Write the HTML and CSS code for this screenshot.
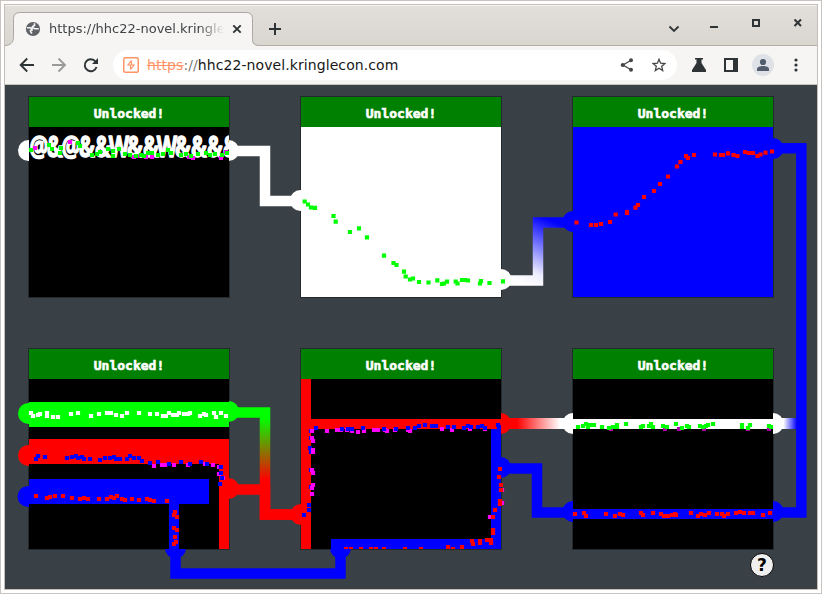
FILE: index.html
```
<!DOCTYPE html>
<html lang="en">
<head>
<meta charset="utf-8">
<title>https://hhc22-novel.kringlecon.com</title>
<link rel="stylesheet" href="styles.css">
</head>
<body>
<div class="window">
  <header class="tabstrip">
    <svg class="tab-shape" width="262" height="34" viewBox="0 0 262 34"><path d="M0 33.500C5 33.500 8.500 30.500 8.500 25.500V6.500Q8.500 .5 15 .5H241Q247.500 .5 247.500 6.500V27.500Q247.500 33.500 254 33.500V35H0Z"/></svg>
    <div class="tab">
      <svg class="globe" width="16" height="16" viewBox="0 0 16 16"><circle cx="8" cy="8" r="7.100" fill="#5f6368"/><path d="M2 6.800H5Q7.200 7 7 9.200H5.500V10.500L7 12.500M9.500 2.200V4.500L7.500 5.500V6.800L10 7.800H13.800" fill="none" stroke="#f5f4f2" stroke-width="1.600"/></svg>
      <span class="tab-title">https://hhc22-novel.kringle</span>
      <svg width="10" height="10" viewBox="0 0 10 10"><path d="M1.300 1.300 8.700 8.700M8.700 1.300 1.300 8.700" fill="none" stroke="#2e3436" stroke-width="1.900"/></svg>
    </div>
    <svg class="plus" width="12" height="12" viewBox="0 0 12 12"><path d="M6 0V12M0 6H12" stroke="#2e3436" stroke-width="2"/></svg>
    <svg class="controls" width="134" height="20" viewBox="0 0 134 20"><g fill="none" stroke="#2e3436"><path d="M1.500 11.500 6 16 10.500 11.500" stroke-width="1.800"/><path d="M42 12H50" stroke-width="2"/><path d="M85 5H91V11H85Z" stroke-width="2"/><path d="M126.500 4.500 133 11M133 4.500 126.500 11" stroke-width="2"/></g></svg>
  </header>
  <nav class="toolbar">
    <svg class="nav-icons" width="80" height="16" viewBox="0 0 80 16"><g fill="none" stroke-width="1.900"><path d="M15 8H2M8.200 1.500 1.700 8 8.200 14.500" stroke="#2e3436"/><path d="M33 8H46M39.500 1.500 46 8 39.500 14.500" stroke="#999b9b"/><path d="M76.500 4.500A6 6 0 1 0 77.500 10" stroke="#2e3436"/></g><path d="M79 1V7H73Z" fill="#2e3436"/></svg>
    <div class="address">
      <svg width="16" height="16" viewBox="0 0 16 16"><rect x=".75" y=".75" width="14.500" height="14.500" rx="1.500" fill="none" stroke="#ff9567" stroke-width="1.500"/><path d="M8.500 3.500 5 8H11L7.500 12.500M8.500 3.500V8M7.500 8V12.500" fill="none" stroke="#ff9567" stroke-width="1.200"/></svg>
      <span class="url"><s>https</s><i>://</i>hhc22-novel.kringlecon.com</span>
      <svg class="share" width="14" height="14" viewBox="0 0 14 14"><path d="M11 2.300 3 7 11 11.700" fill="none" stroke="#454545" stroke-width="1.300"/><circle cx="11" cy="2.300" r="2" fill="#454545"/><circle cx="2.800" cy="7" r="2.100" fill="#454545"/><circle cx="11" cy="11.700" r="2" fill="#454545"/></svg>
      <svg class="star" width="14" height="14" viewBox="0 0 14 14"><path d="M7 1.300 8.600 5.200 13 5.500 9.700 8.300 10.700 12.600 7 10.300 3.300 12.600 4.300 8.300 1 5.500 5.400 5.200Z" fill="none" stroke="#454545" stroke-width="1.300"/></svg>
    </div>
    <svg class="flask" width="14" height="14" viewBox="0 0 14 14"><path d="M3 0H11V1.500H9.500V5L14 12V14H0V12L4.500 5V1.500H3Z" fill="#2e3436"/></svg>
    <svg class="side" width="14" height="14" viewBox="0 0 14 14"><path fill-rule="evenodd" d="M0 0H14V14H0ZM2 2V12H9V2Z" fill="#2e3436"/></svg>
    <svg class="avatar" width="22" height="22" viewBox="0 0 22 22"><circle cx="11" cy="11" r="11" fill="#dee1e6"/><circle cx="11" cy="8" r="3.100" fill="#515c6d"/><path d="M5 17V15C5 13 8 12 11 12S17 13 17 15V17Z" fill="#515c6d"/></svg>
    <svg class="more" width="4" height="14" viewBox="0 0 4 14"><g fill="#2e3436"><circle cx="2" cy="2" r="1.600"/><circle cx="2" cy="7" r="1.600"/><circle cx="2" cy="12" r="1.600"/></g></svg>
  </nav>
  <main class="stage">
    <div class="boards">
      <section class="board"><h2>Unlocked!</h2></section>
      <section class="board white"><h2>Unlocked!</h2></section>
      <section class="board blue"><h2>Unlocked!</h2></section>
      <section class="board"><h2>Unlocked!</h2></section>
      <section class="board"><h2>Unlocked!</h2></section>
      <section class="board"><h2>Unlocked!</h2></section>
    </div>
    <!-- Flow canvas: connectors, painted strokes and particles, in window coordinates. -->
    <svg class="flow" viewBox="5 85 812 503" width="812" height="503">
      <defs>
        <linearGradient id="wb" gradientUnits="userSpaceOnUse" x1="518" y1="281" x2="545" y2="218"><stop offset="0" stop-color="#fff"/><stop offset=".2" stop-color="#eeeeff"/><stop offset="1" stop-color="#00f"/></linearGradient>
        <linearGradient id="gr" gradientUnits="userSpaceOnUse" x1="0" y1="418" x2="0" y2="480"><stop offset="0" stop-color="#0f0"/><stop offset="1" stop-color="#f00"/></linearGradient>
        <linearGradient id="rw"><stop offset=".22" stop-color="#f00"/><stop offset=".82" stop-color="#fff"/></linearGradient>
        <linearGradient id="wbl"><stop offset=".2" stop-color="#fff"/><stop offset="1" stop-color="#00f"/></linearGradient>
        <clipPath id="out"><path d="M5 85H817V588H5ZM29 97V297H229V97ZM301 97V297H501V97ZM573 97V297H773V97ZM29 349V549H229V349ZM301 349V549H501V349ZM573 349V549H773V349Z" clip-rule="evenodd"/></clipPath>
        <clipPath id="b1"><path d="M29 127H229V297H29Z"/></clipPath>
      </defs>
      <g class="pipes">
        <path class="w" d="M229 151H265V201H301"/>
        <path class="b" d="M773 148.300H801.300V512.500H773"/>
        <path d="M501 280.500H538V222.500H573" stroke="url(#wb)"/>
        <path d="M229 412.500H265V514.500H301" stroke="url(#gr)"/>
        <path class="r" d="M229 489.500H265V514.500H301"/>
        <path class="b" d="M175.500 549V573.500H340.500V549M501 468.500H537V512.500H573"/>
      </g>
      <path fill="url(#rw)" d="M501 418H573V429H501Z"/>
      <path fill="url(#wbl)" d="M780 418H797V429H780Z"/>
      <g clip-path="url(#out)">
        <g fill="#fff"><circle cx="28.500" cy="150.500" r="10.500"/><circle cx="228.500" cy="150.500" r="10.500"/><circle cx="300.500" cy="200.500" r="10.500"/><circle cx="501" cy="279.500" r="10.500"/><circle cx="573" cy="423.500" r="10.500"/><circle cx="773" cy="423.500" r="10.500"/></g>
        <g fill="#00f"><circle cx="573" cy="221.500" r="10.500"/><circle cx="773" cy="148.500" r="10.500"/><circle cx="28" cy="496.500" r="10.500"/><circle cx="175.500" cy="548" r="10.500"/><circle cx="340.500" cy="548" r="10.500"/><circle cx="500.500" cy="467.500" r="10.500"/><circle cx="573" cy="511.500" r="10.500"/><circle cx="773" cy="511.500" r="10.500"/></g>
        <g fill="#f00"><circle cx="28.500" cy="455.500" r="10.500"/><circle cx="228.500" cy="488.500" r="10.500"/><circle cx="301" cy="514.500" r="10.500"/><circle cx="500.500" cy="423.500" r="10.500"/></g>
        <g fill="#0f0"><circle cx="28.500" cy="413.500" r="10.500"/><circle cx="228.500" cy="411.500" r="10.500"/></g>
      </g>
      <path fill="#0f0" d="M29 402H229V427H29Z"/>
      <path fill="#f00" d="M29 439H229V549H219V464H29ZM301 379H311V419H501V429H311V549H301Z"/>
      <path fill="#00f" d="M29 479H209V504H179V549H169V504H29ZM491 429H501V549H331V539H491ZM573 509H773V519H573Z"/>
      <path fill="#fff" d="M573 419H773V429H573Z"/>
      <g clip-path="url(#b1)"><text class="glyphs" transform="translate(39 157) scale(.75 1)" x="0 21.300 42.600 64 85.300 106.600 128 149.300 170.600 192 213.300 234.600 256" y="0">@&amp;@&amp;&amp;W&amp;&amp;W&amp;&amp;&amp;&amp;</text></g>
      <g class="dots" id="dots"></g>
    </svg>
    <button class="help">?</button>
  </main>
</div>
<script src="dots.js"></script>
</body>
</html>
```
FILE: styles.css
```
* { box-sizing: border-box; }
body { margin: 0; width: 822px; height: 594px; overflow: hidden; background: #fff; border: 1px solid #c8c3bf; padding: 3px; font-family: "DejaVu Sans", sans-serif; }
svg { display: block; flex: none; }
.window { width: 814px; height: 586px; border: 1px solid #c5beb8; display: flex; flex-direction: column; background: #3a4146; }
.tabstrip { position: relative; height: 41px; flex: none; display: flex; background: linear-gradient(#e2deda, #d9d6d0); border-top: 1px solid #f6f4f2; border-bottom: 1px solid #b0aca6; }
.tab-shape { position: absolute; left: 0; top: 6px; fill: #f6f5f3; stroke: #aaa8a4; }
.tab { position: relative; width: 248px; height: 38px; padding: 7px 11px 0 20px; display: flex; align-items: center; }
.tab-title { width: 177px; margin: 0 6px 0 8px; overflow: hidden; white-space: nowrap; font-size: 13px; line-height: 20px; color: #404446; -webkit-mask-image: linear-gradient(90deg, #000 150px, transparent 175px); mask-image: linear-gradient(90deg, #000 150px, transparent 175px); }
.plus { margin: 17px 0 0 16px; }
.controls { margin: 9px 15px 0 auto; }
.toolbar { height: 39px; flex: none; display: flex; align-items: center; background: #f6f5f3; border-bottom: 1px solid #c9c6bc; padding: 0 19px 0 14px; }
.address { width: 564px; height: 30px; margin-left: 14px; padding: 0 11px 0 10px; border-radius: 15px; background: #fff; display: flex; align-items: center; }
.url { margin-left: 8px; font-size: 14px; line-height: 20px; letter-spacing: .080px; color: #181818; white-space: nowrap; }
.url s { color: #ff9567; }
.url i { color: #777; font-style: normal; }
.share { margin-left: auto; }
.star { margin-left: 18px; }
.flask { margin-left: 15px; }
.side { margin-left: 18px; }
.avatar { margin-left: 14px; }
.more { margin-left: auto; }
.stage { position: relative; flex: 1; padding: 11px 0 0 23px; }
.boards { display: grid; grid-template-columns: repeat(3, 202px); gap: 50px 70px; }
.board { height: 202px; border: 1px solid #24292d; background: #000; }
.board.white { background: #fff; }
.board.blue { background: #00f; }
.board h2 { margin: 0; height: 30px; overflow: hidden; background: #008000; color: #fff; font: bold 13px/33px "DejaVu Sans Mono", monospace; -webkit-text-stroke: .6px #fff; text-align: center; }
.flow { position: absolute; left: 0; top: 0; }
.pipes path { fill: none; stroke-width: 10.500; }
.pipes .w { stroke: #fff; }
.pipes .b { stroke: #00f; }
.pipes .r { stroke: #f00; }
.glyphs { font: bold 28px "Noto Sans", sans-serif; fill: #fff; stroke: #fff; stroke-width: 1.300; stroke-linejoin: round; text-anchor: middle; }
.help { position: absolute; right: 43px; bottom: 12px; width: 24px; height: 24px; padding: 0; border: 1px solid #000; border-radius: 50%; background: #efefef; color: #000; font: bold 17px/20px "DejaVu Sans", sans-serif; text-align: center; }
```
FILE: dots.js
```
// Particle centres as flat x,y lists, one entry per colour group.
const groups = [
  ["#f0f", [35,148,70,142,134,157,138,156,146,157,152,157,189,157,193,158,221,158,226,152]],
  ["#0f0", [31,150,49,145,52,149,60,153,61,148,78,143,80,146,92,155,97,154,100,152,108,149,113,151,113,156,119,149,125,154,130,155,136,156,141,155,144,156,148,153,152,153,158,155,163,154,168,150,171,153,181,155,186,154,191,156,198,154,206,153,210,155,215,154,222,155,227,153,
    304.700,201.500,308,204.500,311,207.500,315,207.800,333.500,216,335.700,221.700,350,232,359,228.300,367,237.400,384,255.700,393.500,263,396.500,265,404,271.700,405.700,276.500,410,279.500,413,278.500,419,282,428.500,282.500,437.300,280.300,442,284,444,283.500,447,281.700,455.700,281.500,457.500,283.500,462,280,465,280,468,280.500,480,283.500,481,281,489.500,283,503,281.300]],
  ["#f00", [576.500,222.500,591,225,596,225,601,224,610,222,615.700,214.500,627,213,627,212,635.500,207.700,638,205,644,197,654,191,660,184,668,176.500,677,166.500,680.500,162,686,156,688,158,694,155,715,154.500,721,155,723,155,728,153.300,733.500,155,737.500,156,745,152,749,153,753,153,757.500,156,760.500,154.500,765.500,152.700,772,151.500]],
  ["#fff", [31,413,33,416,38,415,40,414,47,413,47,416,53,417,58,417,71,414,78,413,91,416,99,414,107,413,111,413,116,415,122,416,127,413,139,413,150,414,157,414,163,416,169,413,173,415,177,415,179,413,187,414,190,413,200,416,204,414,206,415,214,413,216,417,221,413,226,416,166,416,188,414,184,414]],
  ["#f0f", [150,463,154,466,162,465,165,465,174,465,188,465,205,464,213,465,219,467,219,474,223,478]],
  ["#00f", [36,459,38,456,45,457,67,458,72,457,76,456,78,458,82,457,84,459,90,459,100,460,105,458,110,458,114,457,116,459,120,459,127,459,130,456,134,458,139,458,142,461,150,463,158,462,169,464,181,462,190,464,201,462,207,464,221,467,221,473,222,478,220,484]],
  ["#f00", [36,496,47,498,50,497,55,496,63,496,72,498,80,499,84,498,88,499,99,499,107,499,111,497,114,498,117,496,122,499,125,500,132,499,139,500,147,499,150,500,154,501,167,501,175,512,174,515,177,517,174,528,177,530,175,537,176,542,174,544]],
  ["#f0f", [327,431,337,430,341,430,347,430,352,431,358,432,364,431,374,430,378,430,385,430,387,431,395,430,408,430,410,431,442,429,452,430,470,429,485,429]],
  ["#00f", [316,428,311,431,311,438,310,448,311,452,311,470,311,487,309,505,309,510,304,515,342,429,348,429,352,429,363,428,384,429,396,429,408,428,415,428,419,426,425,425,432,426,436,426,448,427,454,427,464,428,468,426,471,427,478,427,482,426,485,428,498,425,499,427,415,428]],
  ["#f0f", [312,431,312,438,313,441,313,450,313,452,312,470,313,473,313,485,312,488,312,494,490,517,502,490,502,503]],
  ["#f00", [500,469,499,477,501,485,501,490,500,501,500,504,495,510,493,517,493,530,493,533,491,540,491,543,487,540,480,541,480,543,472,541,473,544,462,547,453,549,448,547,421,549,405,549,384,549,376,549,371,549,361,549,351,549,346,549,
    575,514,584,513,586,516,606,514,615,516,620,514,623,515,641,513,643,515,653,513,661,514,664,516,668,516,672,515,675,514,676,515,691,513,698,516,701,514,705,515,709,513,717,514,722,514,724,516,728,514,736,513,740,512,744,513,750,513,753,513,763,515,770,513]],
  ["#a0a", [611,429,665,429,679,429,704,429,748,429,769,429]],
  ["#0f0", [578,427,583,426,586,424,588,427,590,425,594,425,602,427,609,428,613,427,617,427,617,425,626,424,641,427,643,426,649,426,651,424,653,427,663,426,667,427,676,424,682,428,687,426,689,427,700,426,703,427,706,426,708,425,713,424,742,427,742,425,748,428,750,425,769,426,771,427]]
];
const layer = document.getElementById("dots");
for (const [color, points] of groups) {
  const path = document.createElementNS("http://www.w3.org/2000/svg", "path");
  let d = "";
  for (let i = 0; i < points.length; i += 2) {
    // Nothing is painted below the lower boards' edge.
    const top = points[i + 1] - 2.1;
    const height = Math.min(4.2, Math.abs(549 - top));
    d += `M${points[i] - 2.1} ${top}h4.200v${height}h-4.200z`;
  }
  path.setAttribute("d", d);
  path.setAttribute("fill", color);
  layer.append(path);
}
```
